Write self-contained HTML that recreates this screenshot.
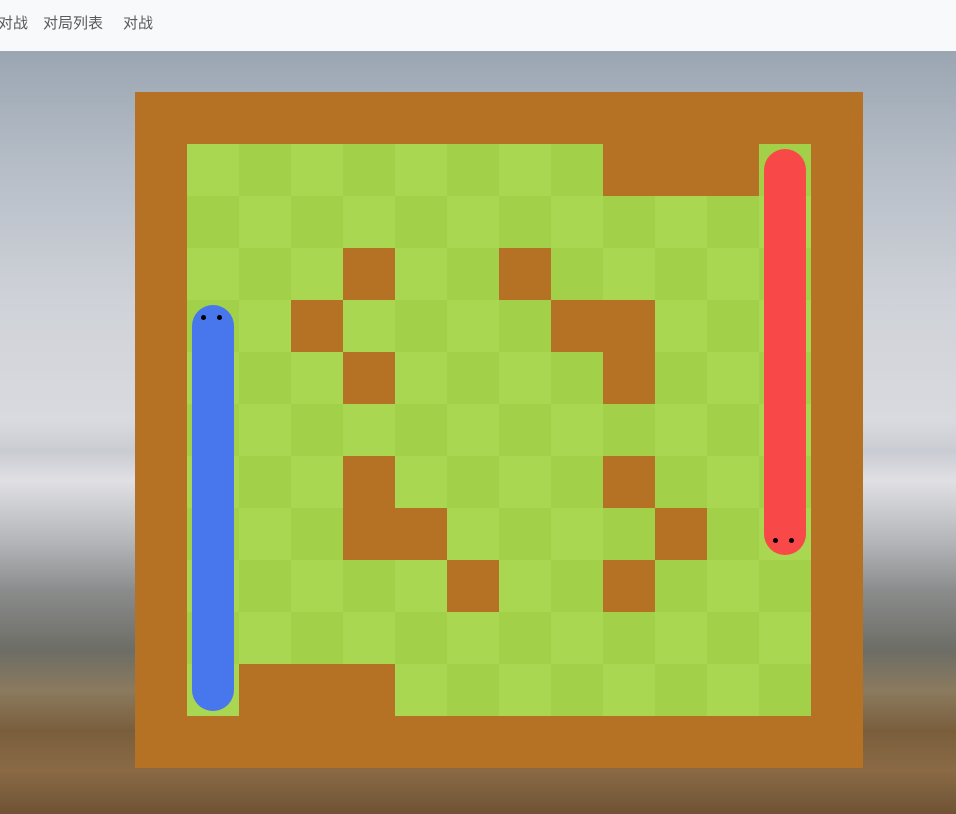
<!DOCTYPE html>
<html><head><meta charset="utf-8"><style>
*{margin:0;padding:0;box-sizing:border-box}
body{width:956px;height:814px;overflow:hidden;position:relative;font-family:"Liberation Sans","Noto Sans CJK SC",sans-serif;background:#8a7a60}
#nav{position:absolute;left:0;top:0;width:956px;height:51px;background:#f8f9fa;font-size:15px;color:#5a5a5a}
#nav span{position:absolute;top:12px}
#bg{position:absolute;left:0;top:51px;width:956px;height:763px;background:
linear-gradient(180deg,#9aa6b2 0px,#b7bec8 120px,#cfd2d8 250px,#d9dadf 370px,#c9ccd2 400px,#e0e0e4 430px,#b4b6ba 490px,#8a8c8c 540px,#6d6d66 600px,#8b7a5e 640px,#7a5e3c 680px,#8a6a45 720px,#6e5334 763px)}
#map{position:absolute;left:135px;top:92px;width:728px;height:676px;background:#b57225}
#in{position:absolute;left:52px;top:52px;width:624px;height:572px;background:repeating-conic-gradient(#a2d149 0 25%,#aad751 0 50%);background-size:104px 104px}
.w{position:absolute;background:#b57225;width:52px;height:52px}
.s{position:absolute;width:42px;border-radius:21px}
.e{position:absolute;width:5px;height:5px;border-radius:50%;background:#000}
</style></head><body>
<div id="nav"><span style="left:-2px">对战</span><span style="left:43px">对局列表</span><span style="left:123px">对战</span></div>
<div id="bg"></div>
<div id="map"><div id="in">
<div class="w" style="left:416px;top:0;width:156px"></div>
<div class="w" style="left:156px;top:104px"></div>
<div class="w" style="left:312px;top:104px"></div>
<div class="w" style="left:104px;top:156px"></div>
<div class="w" style="left:364px;top:156px;width:104px"></div>
<div class="w" style="left:156px;top:208px"></div>
<div class="w" style="left:416px;top:208px"></div>
<div class="w" style="left:156px;top:312px"></div>
<div class="w" style="left:416px;top:312px"></div>
<div class="w" style="left:156px;top:364px;width:104px"></div>
<div class="w" style="left:468px;top:364px"></div>
<div class="w" style="left:260px;top:416px"></div>
<div class="w" style="left:416px;top:416px"></div>
<div class="w" style="left:52px;top:520px;width:156px"></div>
</div></div>
<div class="s" style="left:192px;top:305px;height:406px;background:#4876ec"></div>
<div class="e" style="left:201px;top:315px"></div><div class="e" style="left:217px;top:315px"></div>
<div class="s" style="left:764px;top:149px;height:406px;background:#f94848"></div>
<div class="e" style="left:773px;top:538px"></div><div class="e" style="left:789px;top:538px"></div>
</body></html>
